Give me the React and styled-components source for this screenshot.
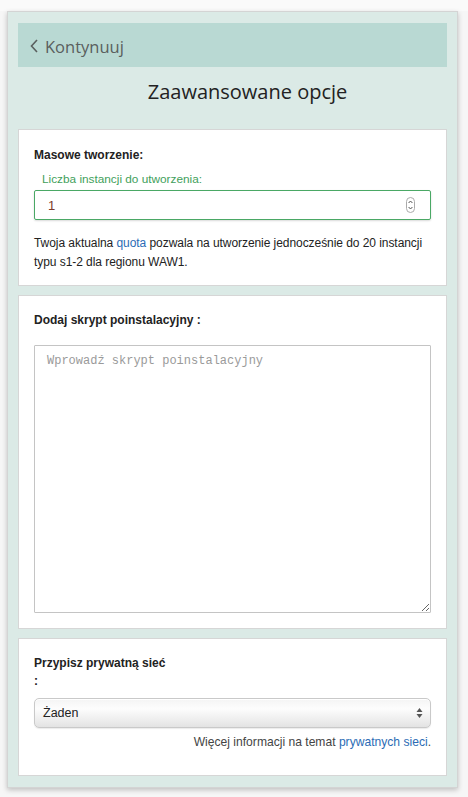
import React from 'react';
import styled, {createGlobalStyle} from 'styled-components';

const GlobalStyle = createGlobalStyle`
  html, body {
    margin: 0;
    padding: 0;
    background: #f6f6f6;
  }
  body {
    font-family: "Liberation Sans", Arial, sans-serif;
    font-size: 12.5px;
    color: #222;
  }
`;

const Page = styled.div`
  padding: 11px 10px 9px 7px;
  height: 797px;
  box-sizing: border-box;
  background: linear-gradient(to bottom, #fafafa 0, #fafafa 11px, #f6f6f6 11px);
`;

const Panel = styled.div`
  width: 451px;
  height: 777px;
  box-sizing: border-box;
  background: #dbeae6;
  border: 1px solid #d4d4d4;
  box-shadow: 0 2px 5px rgba(0, 0, 0, 0.22);
  padding: 11px 10px 10px 10px;
  display: flex;
  flex-direction: column;
`;

const BackBar = styled.div`
  height: 44px;
  background: #b9d9d3;
  display: flex;
  align-items: center;
  gap: 7px;
  padding-left: 12px;
  padding-top: 2px;
  box-sizing: border-box;
  font-family: "Open Sans", sans-serif;
  font-size: 16.5px;
  color: #5a5f5e;
  cursor: pointer;
`;

const Title = styled.h2`
  margin: 0;
  padding: 10px 0 22px 30px;
  text-align: center;
  font-family: "Open Sans", sans-serif;
  font-weight: 400;
  font-size: 20px;
  line-height: 30px;
  color: #222;
`;

const Card = styled.section`
  background: #fff;
  border: 1px solid #d6d6d6;
  padding: ${p => p.$pad || '15px'};
  display: flex;
  flex-direction: column;
  & + & {
    margin-top: 9px;
  }
`;

const Heading = styled.div`
  font-weight: 700;
  font-size: 12px;
  line-height: 18px;
  color: #222;
`;

const FieldLabel = styled.label`
  color: #3fa05b;
  font-size: 11.8px;
  line-height: 18px;
  padding-left: 8px;
  margin-top: 6px;
`;

const NumberBox = styled.div`
  margin-top: 2px;
  height: 30px;
  box-sizing: border-box;
  border: 1px solid #4aa865;
  border-radius: 2px;
  box-shadow: 0 1px 2px rgba(0, 0, 0, 0.15);
  display: flex;
  align-items: center;
  padding: 0 15px 0 13px;
`;

const NumberInput = styled.input`
  flex: 1;
  border: 0;
  outline: none;
  font-family: "Liberation Sans", Arial, sans-serif;
  font-size: 13px;
  color: #7b3b2c;
  padding: 0;
  background: transparent;
`;

const Note = styled.p`
  margin: 14px 0 0;
  font-size: 12px;
  letter-spacing: -0.06px;
  line-height: 19px;
  color: #222;
`;

const Link = styled.a`
  color: #2b6cb5;
  text-decoration: none;
`;

const ScriptArea = styled.textarea`
  margin-top: 16px;
  height: 268px;
  box-sizing: border-box;
  border: 1px solid #c4c4c4;
  border-radius: 1px;
  padding: 8px 12px;
  font-family: "Liberation Mono", "Courier New", monospace;
  font-size: 12px;
  outline: none;
  resize: vertical;
  &::placeholder {
    color: #9a9a9a;
  }
`;

const SelectBox = styled.div`
  margin-top: 8px;
  height: 30px;
  box-sizing: border-box;
  border: 1px solid #c9c9c9;
  border-radius: 5px;
  background: linear-gradient(to bottom, #f4f4f4 0%, #fdfdfd 35%, #e3e3e3 100%);
  box-shadow: inset 0 1px 0 #fff, 0 1px 1px rgba(0, 0, 0, 0.08);
  display: flex;
  align-items: center;
  justify-content: space-between;
  padding: 0 7px 0 8px;
  font-size: 12.5px;
  color: #222;
`;

const Help = styled.div`
  margin-top: 5px;
  text-align: right;
  font-size: 12.1px;
  line-height: 18px;
  color: #444;
`;

const Chevron = () => (
  <svg width="8" height="14" viewBox="0 0 8 14">
    <path d="M7 1 L1.5 7 L7 13" fill="none" stroke="#5a5f5e" strokeWidth="1.6" />
  </svg>
);

const Spinner = () => (
  <svg width="9" height="16" viewBox="0 0 9 16">
    <rect x="0.5" y="0.5" width="8" height="15" rx="4" fill="#fff" stroke="#aaa" />
    <path d="M2.6 6 L4.5 4 L6.4 6" fill="none" stroke="#555" strokeWidth="1" />
    <path d="M2.6 10 L4.5 12 L6.4 10" fill="none" stroke="#555" strokeWidth="1" />
  </svg>
);

const SelectArrows = () => (
  <svg width="7" height="12" viewBox="0 0 7 12">
    <path d="M3.5 1 L6.5 5 L0.5 5 Z" fill="#555" />
    <path d="M3.5 11 L6.5 7 L0.5 7 Z" fill="#555" />
  </svg>
);

export default function App() {
  return (
    <Page>
      <GlobalStyle />
      <Panel>
        <BackBar>
          <Chevron />
          <span>Kontynuuj</span>
        </BackBar>
        <Title>Zaawansowane opcje</Title>

        <Card $pad="16px 15px 13px 15px">
          <Heading>Masowe tworzenie:</Heading>
          <FieldLabel>Liczba instancji do utworzenia:</FieldLabel>
          <NumberBox>
            <NumberInput type="text" defaultValue="1" />
            <Spinner />
          </NumberBox>
          <Note>
            Twoja aktualna <Link href="#">quota</Link> pozwala na utworzenie jednocześnie do 20 instancji typu s1-2 dla regionu WAW1.
          </Note>
        </Card>

        <Card $pad="15px">
          <Heading>Dodaj skrypt poinstalacyjny :</Heading>
          <ScriptArea placeholder="Wprowadź skrypt poinstalacyjny" />
        </Card>

        <Card $pad="15px 15px 24px 15px">
          <Heading>Przypisz prywatną sieć</Heading>
          <Heading>:</Heading>
          <SelectBox>
            <span>Żaden</span>
            <SelectArrows />
          </SelectBox>
          <Help>
            Więcej informacji na temat <Link href="#">prywatnych sieci</Link>.
          </Help>
        </Card>
      </Panel>
    </Page>
  );
}
